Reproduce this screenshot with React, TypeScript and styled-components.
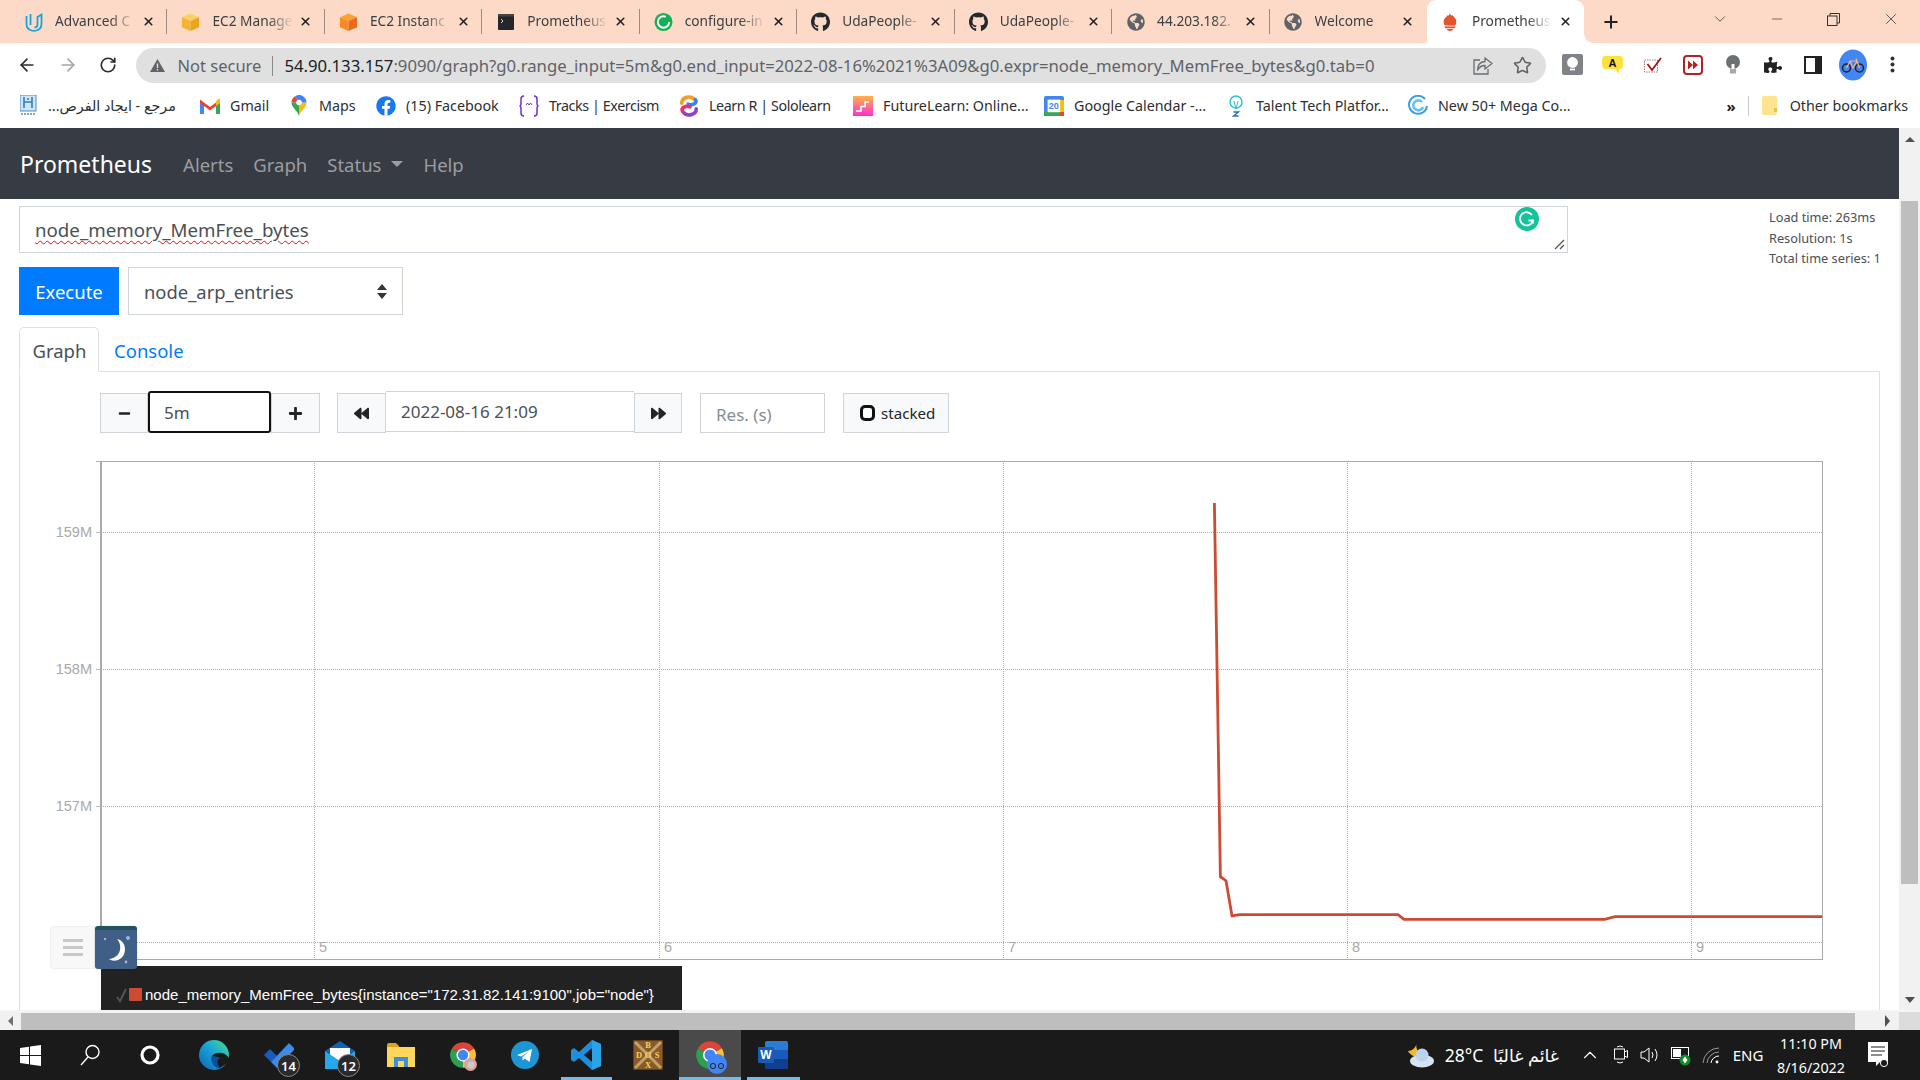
import React from "react";
import styled, { createGlobalStyle } from "styled-components";
import { ArrowLeft, ArrowRight, RotateCw, Star, Plus, X, ChevronDown, Minus, ChevronUp } from "lucide-react";
import { FaGithub, FaGlobeAmericas, FaFacebook, FaPuzzlePiece, FaBackward, FaForward, FaPlus, FaMinus } from "react-icons/fa";

const UI = `"Noto Sans", "DejaVu Sans", sans-serif`;

const Global = createGlobalStyle`
  html, body { margin: 0; padding: 0; overflow: hidden; background: #fff; }
  * { box-sizing: border-box; }
`;

const Screen = styled.div`
  width: 1920px; height: 1080px; display: flex; flex-direction: column; overflow: hidden;
  font-family: ${UI}; background: #fff;
`;

/* ---------- browser chrome ---------- */
const TabStrip = styled.div`
  height: 43px; background: #fcdac7; display: flex; align-items: stretch; padding-left: 10px; flex: none;
`;
const Tab = styled.div<{ $active?: boolean; $sep?: boolean }>`
  width: 157.45px; flex: none; position: relative; display: flex; align-items: center;
  padding: 0 12px 0 14px; gap: 12px; color: #333;
  background: ${p => (p.$active ? "#fff" : "transparent")};
  border-radius: ${p => (p.$active ? "9px 9px 0 0" : "0")};
  &::before {
    content: ""; position: absolute; right: 0; top: 9px; bottom: 9px; width: 1px;
    background: ${p => (p.$sep ? "#9a8a80" : "transparent")};
  }
  &::after {
    content: ""; position: absolute; right: -10px; bottom: 0; width: 10px; height: 10px;
    background: ${p => (p.$active ? "radial-gradient(circle at 100% 0, transparent 10px, #fff 10px)" : "none")};
  }
`;
const TabIcon = styled.span`
  width: 19px; height: 20px; flex: none; display: flex; align-items: center; justify-content: center;
`;
const TabTitle = styled.span`
  flex: 1; min-width: 0; margin-right: -7px; overflow: hidden; white-space: nowrap; font-size: 13.7px; color: #3c4043; padding-bottom: 2px;
  -webkit-mask-image: linear-gradient(to right, #000 68%, rgba(0,0,0,.1) 96%);
  mask-image: linear-gradient(to right, #000 68%, rgba(0,0,0,.1) 96%);
`;
const TabClose = styled.span`
  width: 14px; flex: none; display: flex; justify-content: center; color: #222;
`;
const NewTab = styled.span`
  width: 40px; margin-left: 6.5px; display: flex; align-items: center; justify-content: center; color: #222;
`;
const WinControls = styled.div`
  margin-left: auto; display: flex; align-items: flex-start; padding: 6px 1px 0 0;
`;
const WinBtn = styled.span<{ $w: number }>`
  width: ${p => p.$w}px; height: 26px; display: flex; align-items: center; justify-content: center; color: #333;
`;

const ToolRow = styled.div`
  height: 43px; background: #fff; display: flex; align-items: center; padding-left: 7px; flex: none;
`;
const NavBtn = styled.span<{ $off?: boolean }>`
  width: 40.5px; display: flex; justify-content: center; color: ${p => (p.$off ? "#a5a5a5" : "#2b2b2b")};
`;
const Omnibox = styled.div`
  width: 1410px; height: 35px; margin: 2px 7px 0 7px; background: #e0e0e0; border-radius: 18px;
  display: flex; align-items: center; padding-left: 14px; font-size: 16.72px; color: #5f6368; white-space: nowrap; position: relative;
`;
const NotSecure = styled.span`
  margin-left: 13px; padding-right: 11px; border-right: 1px solid #8a8a8a; line-height: 20px; font-size: 16.5px; color: #5f6368;
`;
const Url = styled.span`
  margin-left: 11px; color: #5f6368;
`;
const Host = styled.span`color: #202124;`;
const OmniActions = styled.div`
  margin-left: auto; display: flex; gap: 20px; padding-right: 14px; color: #5f6368; align-items: center;
`;
const ExtCell = styled.span`
  width: 40px; flex: none; display: flex; justify-content: center; align-items: center;
`;
const BookmarkRow = styled.div`
  height: 42px; background: #fff; display: flex; align-items: center; padding: 0 0 3px 18px; flex: none;
  font-size: 14.3px; color: #2b2f33; white-space: nowrap;
`;
const Bookmark = styled.div<{ $w: number; $tight?: boolean }>`
  width: ${p => p.$w}px; flex: none; display: flex; align-items: center; gap: 10px;
  letter-spacing: ${p => (p.$tight ? "-0.42px" : "0")};
`;
const BmIcon = styled.span`
  width: 20px; flex: none; display: flex; align-items: center; justify-content: center;
`;
const BookmarkEnd = styled.div`
  margin-left: 1px; display: flex; align-items: center; justify-content: flex-end; flex: 1; padding-right: 12px;
`;
const Chevrons = styled.span`font-weight: 700; font-size: 15px; color: #222;`;
const BmDivider = styled.span`
  width: 1px; height: 20px; background: #c8c8c8; margin: 0 13px 0 12px;
`;
const OtherLabel = styled.span`margin-left: 12px;`;

/* ---------- page viewport ---------- */
const Viewport = styled.div`
  height: 882px; display: flex; flex: none;
`;
const Page = styled.div`
  width: 1899px; height: 882px; overflow: hidden; display: flex; flex-direction: column; color: #495057;
`;
const Navbar = styled.nav`
  height: 71px; flex: none; background: #373b43; display: flex; align-items: center; padding: 1px 0 0 20px; font-size: 18.5px;
`;
const Brand = styled.span`
  color: #fff; font-size: 23px; margin-right: 31px;
`;
const NavLink = styled.span`
  color: #9b9da1; margin-right: 20px; display: flex; align-items: center;
`;
const Caret = styled.span`
  width: 0; height: 0; margin-left: 10px; border-left: 6px solid transparent; border-right: 6px solid transparent;
  border-top: 6px solid #9b9da1;
`;
const Content = styled.div`
  padding-left: 19px; flex: 1; display: flex; flex-direction: column; min-height: 0;
`;
const QueryRow = styled.div`
  display: flex; padding-top: 7px; flex: none;
`;
const QueryCol = styled.div`
  width: 1549px; flex: none;
`;
const ExprBox = styled.div`
  height: 47px; border: 1px solid #ced4da; position: relative; display: flex; align-items: center;
  padding: 0 15px; font-size: 18.7px; color: #495057; background: #fff;
`;
const ExprText = styled.span`
  text-decoration: underline wavy #e01010 1px; text-underline-offset: 3px;
`;
const GrammarlyBadge = styled.span`
  position: absolute; right: 28px; top: 0; width: 24px; height: 24px; display: flex;
`;
const ResizeHandle = styled.span`
  position: absolute; right: 2px; bottom: 2px; width: 11px; height: 11px; display: flex;
`;
const ActionRow = styled.div`
  display: flex; gap: 9px; margin-top: 14px; height: 48px;
`;
const ExecuteBtn = styled.button`
  width: 100px; border: 0; background: #007bff; color: #fff; font: 18.5px ${UI}; padding: 1px 0 0;
`;
const MetricSelect = styled.div`
  width: 275px; border: 1px solid #ced4da; display: flex; align-items: center; justify-content: space-between;
  padding: 1px 15px 0; font-size: 18.4px; color: #495057;
`;
const StatsCol = styled.div`
  margin-left: 201px; padding-top: 1px; font-size: 12.75px; line-height: 20.6px; color: #495057; white-space: nowrap;
`;
const TabNav = styled.div`
  display: flex; margin-top: 12px; height: 45px; flex: none; position: relative; z-index: 1; margin-bottom: -1px;
`;
const PageTab = styled.div<{ $active?: boolean }>`
  height: 45px; display: flex; align-items: center; font-size: 18.5px; padding-top: 2px;
  width: ${p => (p.$active ? "80px" : "auto")};
  padding-left: ${p => (p.$active ? "12.5px" : "14px")};
  color: ${p => (p.$active ? "#495057" : "#007bff")};
  border: 1px solid ${p => (p.$active ? "#dee2e6" : "transparent")};
  border-bottom-color: ${p => (p.$active ? "#fff" : "transparent")};
  border-radius: 5px 5px 0 0; background: ${p => (p.$active ? "#fff" : "transparent")};
`;
const Pane = styled.div`
  width: 1861px; flex: 1; min-height: 0; position: relative; border: 1px solid #dee2e6; border-bottom: 0;
  display: flex; flex-direction: column;
`;
const Controls = styled.div`
  display: flex; align-items: flex-start; padding: 19px 0 0 80px; height: 61px; flex: none;
`;
const Group = styled.div<{ $gap: number }>`
  display: flex; align-items: flex-start; margin-right: ${p => p.$gap}px;
`;
const CtrlBtn = styled.div<{ $w: number }>`
  width: ${p => p.$w}px; height: 40px; margin-top: 2px; background: #f8f9fa; border: 1px solid #ced4da;
  display: flex; align-items: center; justify-content: center; color: #212529;
`;
const RangeInput = styled.div`
  width: 123px; height: 42px; border: 2px solid #111; border-radius: 3px; display: flex; align-items: center;
  padding-left: 14px; font-size: 17px; color: #495057; background: #fff;
`;
const DateInput = styled.div`
  width: 248px; height: 41px; border: 1px solid #ced4da; display: flex; align-items: center;
  padding-left: 15px; font-size: 17px; color: #495057; background: #fff; border-left: 0; border-right: 0;
`;
const ResInput = styled.div`
  width: 125px; height: 40px; margin: 2px 18px 0 0; border: 1px solid #ced4da; display: flex; align-items: center;
  padding: 2px 0 0 15px; font-size: 17px; color: #868e96;
`;
const StackedBtn = styled.div`
  width: 106px; height: 40px; margin-top: 2px; background: #f8f9fa; border: 1px solid #ced4da; display: flex; align-items: center;
  padding-left: 16px; gap: 6px; font-size: 15.1px; color: #212529;
`;
const StackBox = styled.span`
  width: 15px; height: 16px; border: 3px solid #111; border-radius: 5px; background: #fff; flex: none;
`;
const ChartSvg = styled.svg`
  display: block; flex: none; margin-top: 22px;
`;
const Legend = styled.div`
  width: 581px; height: 44px; flex: none; margin-left: 81px; background: #222; color: #fff; position: relative;
  font: 15.03px "Liberation Sans", Arial, sans-serif; display: flex; align-items: flex-end; padding: 0 0 7px 14px; white-space: nowrap;
`;
const LegendCheck = styled.span`
  width: 14px; height: 16px; display: flex; flex: none;
`;
const Swatch = styled.span`
  width: 13px; height: 13px; background: #cb4b34; flex: none; margin: 0 3px 2px 0; border-radius: 1px;
`;
const ChartMenu = styled.div`
  position: absolute; left: 30px; top: 554px; width: 87px; height: 43px; display: flex;
`;
const MenuBurger = styled.div`
  width: 45px; background: #f8f8f8; border: 1px solid #efefef; border-radius: 4px 0 0 4px; display: flex;
  flex-direction: column; gap: 4px; align-items: center; justify-content: center;
`;
const BurgerBar = styled.span`
  width: 20px; height: 3px; background: #c9c9c9; display: block;
`;
const MoonBtn = styled.div`
  width: 42px; background: #3f5f87; border-top: 4px solid #24525f; border-radius: 3px; display: flex;
  align-items: center; justify-content: center; box-shadow: 0 0 2px rgba(0,0,0,.2);
`;

/* ---------- scrollbars ---------- */
const VScroll = styled.div`
  width: 21px; flex: none; background: #f1f1f1; display: flex; flex-direction: column; align-items: center;
`;
const VThumb = styled.div`
  width: 17px; height: 683px; background: #bebebe; margin-top: 59px; flex: none;
`;
const ArrowUp = styled.span`
  width: 0; height: 0; margin-top: 9px; margin-bottom: 0; flex: none;
  border-left: 5px solid transparent; border-right: 5px solid transparent; border-bottom: 5px solid #505050;
`;
const ArrowDown = styled.span`
  width: 0; height: 0; margin-top: auto; margin-bottom: 7px; flex: none;
  border-left: 5px solid transparent; border-right: 5px solid transparent; border-top: 6px solid #505050;
`;
const HScroll = styled.div`
  height: 20px; flex: none; background: #f1f1f1; display: flex; align-items: center; border-top: 2px solid #f4f4f4;
`;
const ArrowLeftTri = styled.span`
  width: 0; height: 0; margin-left: 8px; border-top: 5px solid transparent; border-bottom: 5px solid transparent; border-right: 5px solid #707070; flex: none;
`;
const HThumb = styled.div`
  width: 1834px; height: 17px; margin-left: 8px; background: #bebebe; flex: none;
`;
const ArrowRightTri = styled.span`
  width: 0; height: 0; margin-left: 30px; border-top: 6px solid transparent; border-bottom: 6px solid transparent; border-left: 5px solid #505050; flex: none;
`;
const ScrollCorner = styled.span`
  margin-left: auto; width: 21px; height: 18px; background: #dcdcdc; flex: none;
`;

/* ---------- taskbar ---------- */
const Taskbar = styled.div`
  height: 50px; flex: none; background: #1a1a1a; display: flex; color: #fff; font-size: 14.6px; white-space: nowrap;
`;
const TaskCell = styled.div<{ $w?: number; $active?: boolean; $open?: boolean }>`
  width: ${p => p.$w ?? 62}px; flex: none; position: relative; display: flex; align-items: center; justify-content: center;
  background: ${p => (p.$active ? "#4a4a4a" : "transparent")};
  &::after {
    content: ""; position: absolute; bottom: 0; height: 3px;
    left: ${p => (p.$active ? "0" : "6px")}; right: ${p => (p.$active ? "0" : "5px")};
    background: ${p => (p.$open ? "#76b9ed" : "transparent")};
  }
`;
const Badge = styled.span`
  position: absolute; right: 10px; bottom: 3px; width: 23px; height: 23px; border-radius: 50%;
  background: #2a2a2a; border: 1px solid #888; display: flex; align-items: center; justify-content: center;
  font-size: 13px; font-weight: 600; color: #fff;
`;
const Tray = styled.div`
  margin-left: auto; display: flex; align-items: center; padding-right: 26px;
`;
const TrayItem = styled.span<{ $w: number; $ml?: number; $fs?: number }>`
  width: ${p => p.$w}px; margin-left: ${p => p.$ml ?? 0}px; flex: none; display: flex; align-items: center; justify-content: center;
  font-size: ${p => p.$fs ?? 14.6}px;
`;
const Clock = styled.div`
  width: 80px; margin: 0 13px 0 2px; text-align: center; font-size: 14.3px; line-height: 23.5px; padding-top: 1px;
`;

/* ---------- favicons and other drawings ---------- */
const UdacityIcon = () => (
  <svg width="18" height="20" viewBox="0 0 18 20" fill="none" stroke="#1aa5da" strokeWidth="1.8">
    <path d="M1.5 4 V12 Q1.5 17 6.5 18.5 Q9 19.3 11.5 18.5 Q16.5 17 16.5 12 V2.5 L12.5 5 V13 Q12.5 15 9.5 15.5" />
    <path d="M5.5 2 V13" />
  </svg>
);
const CubeIcon = ({ a, b, c }: { a: string; b: string; c: string }) => (
  <svg width="20" height="20" viewBox="0 0 20 20">
    <polygon points="10,1 19,5 10,9 1,5" fill={a} />
    <polygon points="1,5 10,9 10,19.5 1,15.5" fill={b} />
    <polygon points="19,5 10,9 10,19.5 19,15.5" fill={c} />
  </svg>
);
const TerminalIcon = () => (
  <svg width="16" height="16" viewBox="0 0 16 16">
    <rect x="0" y="0" width="16" height="16" rx="1" fill="#23272b" />
    <rect x="0" y="0" width="16" height="2.5" fill="#444" />
    <path d="M3 5 L5 7 L3 9" stroke="#ddd" fill="none" strokeWidth="1" />
  </svg>
);
const ConfigIcon = () => (
  <svg width="20" height="20" viewBox="0 0 20 20">
    <circle cx="10" cy="10" r="9.5" fill="#13b055" />
    <circle cx="10" cy="10" r="6" fill="none" stroke="#fff" strokeWidth="2" strokeDasharray="30 8" />
    <path d="M7 10 L9.4 12.3 L13.4 8" stroke="#13b055" strokeWidth="2" fill="none" />
  </svg>
);
const FlameIcon = () => (
  <svg width="14" height="18" viewBox="0 0 14 18" fill="#e6522c">
    <path d="M7 0 C7.5 3 9 3 9.6 2 C9.9 3.5 12 4.5 13 6.5 C13.8 8.5 13 11.5 12 12.5 H2 C0.8 11.5 0.2 8.5 1 6.5 C2 4.5 4 4 4.4 2.3 C5 3 6 3 7 0 Z" />
    <rect x="1.8" y="13.4" width="10.4" height="1.8" />
    <path d="M3.5 16 H10.5 Q9.5 18 7 18 Q4.5 18 3.5 16 Z" />
  </svg>
);
const ArabicSiteIcon = () => (
  <svg width="17" height="21" viewBox="0 0 17 21">
    <rect x="0" y="0" width="16" height="16" fill="#cfe6f7" stroke="#4a90c9" strokeWidth="1" />
    <path d="M4 2 V13 M12 2 V13 M4 7 H12 M7 4 H9" stroke="#2f7fbf" strokeWidth="1.6" />
    <path d="M1 19 H15" stroke="#7aa9cc" strokeWidth="2" strokeDasharray="2 1" />
  </svg>
);
const GmailIcon = () => (
  <svg width="20" height="16" viewBox="0 0 20 16">
    <path d="M0 3 V16 H4 V6.5 Z" fill="#4285f4" />
    <path d="M20 3 V16 H16 V6.5 Z" fill="#34a853" />
    <path d="M0 1.5 L10 9 L20 1.5 V5 L10 12.5 L0 5 Z" fill="#ea4335" />
    <path d="M16 3 L20 0 V5 L16 8 Z" fill="#fbbc04" />
  </svg>
);
const MapsIcon = () => (
  <svg width="16" height="21" viewBox="0 0 16 21">
    <path d="M8 21 C7 16 0.5 13 0.5 7.5 L8 7.5 Z" fill="#34a853" />
    <path d="M8 21 C9 16 15.5 13 15.5 7.5 L8 7.5 Z" fill="#fbbc04" />
    <path d="M0.5 7.5 A7.5 7.5 0 0 1 4 1.2 L8 7.5 Z" fill="#ea4335" />
    <path d="M4 1.2 A7.5 7.5 0 0 1 15.5 7.5 L8 7.5 Z" fill="#4285f4" />
    <circle cx="8" cy="7.5" r="2.8" fill="#fff" />
  </svg>
);
const TracksIcon = () => (
  <svg width="20" height="22" viewBox="0 0 20 22" fill="none" stroke="#6b2fd6" strokeWidth="1.5">
    <path d="M5 1 Q2 1 2 4 V8 Q2 11 0.5 11 Q2 11 2 14 V18 Q2 21 5 21" />
    <path d="M15 1 Q18 1 18 4 V8 Q18 11 19.5 11 Q18 11 18 14 V18 Q18 21 15 21" />
    <path d="M7 10 L8.5 8 L10 10 M10 10 L11.5 8 L13 10" stroke="#6b2fd6" strokeWidth="1" />
  </svg>
);
const SoloIcon = () => (
  <svg width="22" height="24" viewBox="0 0 22 24" fill="none" strokeWidth="4" strokeLinecap="round">
    <path d="M3 9 C3 2 13 0 17 5" stroke="#f59e27" />
    <path d="M18 5 C21 9 14 12 10 10" stroke="#3b82e6" />
    <path d="M19 15 C19 22 9 24 5 19" stroke="#8e44c9" />
    <path d="M4 18 C1 14 8 11 12 13" stroke="#ef2f6b" />
  </svg>
);
const FutureIcon = () => (
  <svg width="20" height="20" viewBox="0 0 20 20">
    <defs>
      <linearGradient id="fl" x1="0" y1="0" x2="0" y2="1">
        <stop offset="0" stopColor="#ffb347" />
        <stop offset="1" stopColor="#ff2fd0" />
      </linearGradient>
    </defs>
    <rect width="20" height="20" fill="url(#fl)" />
    <path d="M3 15 H8 V10.5 H12 V6 H16" stroke="#fff" strokeWidth="1.6" fill="none" />
  </svg>
);
const CalIcon = () => (
  <svg width="20" height="20" viewBox="0 0 20 20">
    <rect width="20" height="20" rx="2" fill="#4285f4" />
    <rect x="16" y="4" width="4" height="12" fill="#fbbc04" />
    <rect x="0" y="16" width="20" height="4" fill="#34a853" />
    <rect x="16" y="16" width="4" height="4" fill="#ea4335" />
    <rect x="3.6" y="3.6" width="12.6" height="12.6" fill="#fff" />
    <text x="9.8" y="13.4" fontSize="9" fontWeight="700" fontFamily="Liberation Sans" textAnchor="middle" fill="#4285f4">20</text>
  </svg>
);
const TalentIcon = () => (
  <svg width="16" height="22" viewBox="0 0 16 22" fill="none" stroke="#2dc3d6" strokeWidth="1.5">
    <circle cx="8" cy="7" r="6" />
    <path d="M6 6 L8 14 L10 6" strokeWidth="1" />
    <path d="M5.5 17 H10.5 L5.5 21 H10.5" stroke="#2d6fb8" strokeWidth="1.4" />
  </svg>
);
const MegaIcon = () => (
  <svg width="20" height="21" viewBox="0 0 20 21" fill="none" stroke="#3aa0e8" strokeWidth="2">
    <path d="M17 4 A9 9 0 1 0 19 11" />
    <path d="M14 7 A5 5 0 1 0 15 12" strokeWidth="2.6" stroke="#6cbcf2" />
  </svg>
);
const FolderBm = () => (
  <svg width="16" height="20" viewBox="0 0 16 20">
    <rect x="0" y="0" width="15" height="19" rx="2" fill="#fde58f" />
    <rect x="12" y="12" width="3" height="4" fill="#e6c34f" />
  </svg>
);
const BulbBox = () => (
  <svg width="21" height="21" viewBox="0 0 21 21">
    <rect width="21" height="21" rx="2" fill="#7f8387" />
    <circle cx="10.5" cy="8.5" r="5.4" fill="#fff" />
    <rect x="8" y="14.6" width="5" height="1.8" fill="#fff" />
  </svg>
);
const AnnotateIcon = () => (
  <svg width="21" height="20" viewBox="0 0 21 20">
    <path d="M3 1 H18 Q21 1 21 5 V10 Q21 14 18 14 H17 L17 19 L13 14 H4 Q0 14 0 9 V5 Q0 1 3 1 Z" fill="#fde23f" />
    <text x="10.5" y="12" textAnchor="middle" fontSize="11" fontWeight="700" fontFamily="Liberation Sans" fill="#111">A</text>
  </svg>
);
const CheckBoxExt = () => (
  <svg width="18" height="16" viewBox="0 0 18 16">
    <rect x="0.5" y="3" width="13" height="12" fill="none" stroke="#c46a6a" strokeWidth="1" strokeDasharray="1.5 1" />
    <path d="M3.5 7 L8 13 L17 1" stroke="#a01818" strokeWidth="1.8" fill="none" />
  </svg>
);
const ForwardExt = () => (
  <svg width="20" height="20" viewBox="0 0 20 20">
    <rect x="1" y="1" width="18" height="18" rx="3" fill="#fff" stroke="#b22222" strokeWidth="2" />
    <polygon points="5,5.5 10,10 5,14.5" fill="#b22222" />
    <polygon points="10,5.5 15,10 10,14.5" fill="#b22222" />
  </svg>
);
const BulbGrey = () => (
  <svg width="16" height="19" viewBox="0 0 16 19">
    <circle cx="8" cy="7" r="7" fill="#6d7074" />
    <path d="M6.5 9 V14 H9.5 V9 Z" fill="#fff" />
    <rect x="5" y="14" width="6" height="4.5" fill="#a8a8a8" />
  </svg>
);
const SidePanel = () => (
  <svg width="18" height="18" viewBox="0 0 18 18">
    <rect x="1" y="1" width="16" height="16" fill="#fff" stroke="#222" strokeWidth="2" />
    <rect x="11" y="1" width="6" height="16" fill="#222" />
  </svg>
);
const Avatar = () => (
  <svg width="28" height="32" viewBox="0 0 28 32">
    <ellipse cx="14" cy="16" rx="14" ry="15.5" fill="#4285f4" />
    <circle cx="7.5" cy="19" r="4" fill="none" stroke="#222" strokeWidth="1.5" />
    <circle cx="20.5" cy="19" r="4" fill="none" stroke="#222" strokeWidth="1.5" />
    <path d="M7.5 19 L11 12 H18 L20.5 19 M11 12 L14 19 L18 12 M17 9.5 L18 12" stroke="#ffb27a" strokeWidth="1.2" fill="none" />
  </svg>
);
const Kebab = () => (
  <svg width="5" height="17" viewBox="0 0 5 17" fill="#333">
    <circle cx="2.5" cy="2.5" r="2" /><circle cx="2.5" cy="8.5" r="2" /><circle cx="2.5" cy="14.5" r="2" />
  </svg>
);
const Warn = () => (
  <svg width="15" height="13" viewBox="0 0 15 13">
    <path d="M7.5 0 L15 13 H0 Z" fill="#5f6368" />
    <rect x="6.8" y="4.4" width="1.4" height="4.6" fill="#e0e0e0" />
    <rect x="6.8" y="10" width="1.4" height="1.4" fill="#e0e0e0" />
  </svg>
);
const ShareBox = () => (
  <svg width="20" height="18" viewBox="0 0 20 18" fill="none" stroke="#6a6e72" strokeWidth="1.3">
    <path d="M7 3 H1 V17 H15 V12" />
    <path d="M12 1 L19 6.5 L12 12 V8.5 C8 8.5 6 10 4.5 13.5 C4.5 8 7.5 4.8 12 4.5 Z" />
  </svg>
);
const RestoreIcon = () => (
  <svg width="13" height="13" viewBox="0 0 13 13" fill="none" stroke="#333" strokeWidth="1">
    <rect x="0.5" y="3" width="9.5" height="9.5" />
    <path d="M3 3 V0.5 H12.5 V10 H10" />
  </svg>
);
const Grammarly = () => (
  <svg width="24" height="24" viewBox="0 0 24 24">
    <circle cx="12" cy="12" r="12" fill="#15c39a" />
    <path d="M17 8 A6.6 6.6 0 1 0 18 13.5 H13.5" fill="none" stroke="#fff" strokeWidth="1.8" />
    <path d="M15.5 15.5 L18.4 13.5 L18.8 17" fill="#fff" />
  </svg>
);
const Grip = () => (
  <svg width="11" height="11" viewBox="0 0 11 11" stroke="#555" strokeWidth="1.3">
    <path d="M1 10 L10 1 M6 10 L10 6" />
  </svg>
);
const SortArrows = () => (
  <svg width="10" height="15" viewBox="0 0 10 15" fill="#333">
    <polygon points="5,0 10,6 0,6" /><polygon points="5,15 10,9 0,9" />
  </svg>
);
const Moon = () => (
  <svg width="30" height="34" viewBox="0 0 30 34">
    <path d="M19 5 C25 11 23 24 11 25 C16 29 27 26 27 15 C27 10 24 6 19 5 Z" fill="#fff" transform="translate(-3,1)" />
    <circle cx="4" cy="6" r="1.2" fill="#9fb6d0" />
    <circle cx="27" cy="5" r="2" fill="#9fb6d0" />
    <circle cx="25" cy="29" r="1.4" fill="#9fb6d0" />
  </svg>
);

const WindowsLogo = () => (
  <svg width="21" height="21" viewBox="0 0 21 21" fill="#fff">
    <polygon points="0,3 9,1.7 9,10 0,10" /><polygon points="10,1.5 21,0 21,10 10,10" />
    <polygon points="0,11 9,11 9,19.3 0,18" /><polygon points="10,11 21,11 21,21 10,19.5" />
  </svg>
);
const SearchIcon = () => (
  <svg width="20" height="22" viewBox="0 0 20 22" fill="none" stroke="#fff" strokeWidth="1.4">
    <circle cx="12.5" cy="8" r="6.5" /><path d="M8 13 L1 21" />
  </svg>
);
const CortanaIcon = () => (
  <svg width="20" height="20" viewBox="0 0 20 20" fill="none" stroke="#fff" strokeWidth="3.2">
    <circle cx="10" cy="10" r="8" />
  </svg>
);
const EdgeIcon = () => (
  <svg width="30" height="30" viewBox="0 0 30 30">
    <defs>
      <linearGradient id="edge" x1="1" y1="0" x2="0" y2="1">
        <stop offset="0" stopColor="#4fdc8a" />
        <stop offset="0.45" stopColor="#1aa6d6" />
        <stop offset="1" stopColor="#0c62b8" />
      </linearGradient>
    </defs>
    <circle cx="15" cy="15" r="15" fill="url(#edge)" />
    <path d="M30 18 C26 12 17 11 13 16 C11 21 15 27 21 28 L30 22 Z" fill="#1a1a1a" />
    <path d="M13 16 C11 23 16 29 22 28.5 C18 25 17 20 21 18 C16 16 14 16 13 16 Z" fill="#0b4f9c" />
  </svg>
);
const TodoIcon = () => (
  <svg width="30" height="26" viewBox="0 0 30 26">
    <polygon points="0,13 6,7 13,14 7,20" fill="#185abd" />
    <polygon points="7,20 25,1 31,7 13,26" fill="#3c8be8" />
  </svg>
);
const MailIcon = () => (
  <svg width="30" height="28" viewBox="0 0 30 28">
    <polygon points="0,10 15,0 30,10 15,20" fill="#0f63b5" />
    <polygon points="5,7 25,7 25,16 15,21 5,16" fill="#fff" />
    <polygon points="0,10 15,20 30,10 30,28 0,28" fill="#28a8ea" />
  </svg>
);
const FolderTask = () => (
  <svg width="28" height="24" viewBox="0 0 28 24">
    <path d="M0 2 Q0 0 2 0 H9 L12 3 H12 V6 H0 Z" fill="#e0a020" />
    <rect x="0" y="4" width="28" height="20" fill="#fdd65e" />
    <path d="M7 24 V14 H21 V24 H17 V18 H11 V24 Z" fill="#3d8fd6" />
  </svg>
);
const ChromeIcon = ({ size = 28 }: { size?: number }) => (
  <svg width={size} height={size} viewBox="0 0 24 24">
    <path d="M12 12 L2.47 6.5 A11 11 0 0 1 21.53 6.5 Z" fill="#db4437" />
    <path d="M12 12 L21.53 6.5 A11 11 0 0 1 12 23 Z" fill="#fbc02d" />
    <path d="M12 12 L12 23 A11 11 0 0 1 2.47 6.5 Z" fill="#2e9e4f" />
    <circle cx="12" cy="12" r="5.6" fill="#fff" />
    <circle cx="12" cy="12" r="4.4" fill="#4285f4" />
  </svg>
);
const ChromeOverlay = styled.span`
  position: absolute; right: 14px; bottom: 6px; display: flex;
`;
const ChromePin = styled.span`
  position: absolute; right: 17px; bottom: 9px; display: flex;
`;
const TelegramIcon = () => (
  <svg width="28" height="28" viewBox="0 0 28 28">
    <circle cx="14" cy="14" r="14" fill="#1e96d3" />
    <path d="M6 14 L21 8 L18.5 21 L13.8 17.6 L11.6 19.6 L11.4 16 L18 10.5 L10 15.5 Z" fill="#fff" />
  </svg>
);
const VsCodeIcon = () => (
  <svg width="30" height="30" viewBox="0 0 30 30">
    <path d="M21 0 L30 4 V26 L21 30 L8 18 L3 22 L0 20 V10 L3 8 L8 12 Z M21 8 L13 15 L21 22 Z" fill="#1f8fdc" />
    <path d="M21 0 L30 4 V26 L21 30 Z" fill="#2aa6ea" opacity=".9" />
  </svg>
);
const DosBox = () => (
  <svg width="30" height="30" viewBox="0 0 30 30">
    <rect width="30" height="30" fill="#8a5a2b" stroke="#5a3416" strokeWidth="1.5" />
    <path d="M2 2 L28 28 M28 2 L2 28" stroke="#bfa36a" strokeWidth="3" />
    <g fontFamily="Liberation Serif" fontSize="8.5" fontWeight="700" fill="#f2d35a" textAnchor="middle">
      <text x="15" y="8">B</text>
      <text x="6" y="18">D</text><text x="15" y="18">O</text><text x="24" y="18">S</text>
      <text x="15" y="28">X</text>
    </g>
  </svg>
);
const WordIcon = () => (
  <svg width="30" height="28" viewBox="0 0 30 28">
    <rect x="7" y="0" width="23" height="28" rx="2" fill="#2b7cd3" />
    <rect x="7" y="18" width="23" height="10" fill="#103f91" />
    <rect x="7" y="9" width="23" height="9" fill="#185abd" />
    <rect x="0" y="6" width="16" height="16" rx="1" fill="#1a5bb5" />
    <text x="8" y="18" textAnchor="middle" fontSize="12" fontWeight="700" fontFamily="Liberation Sans" fill="#fff">W</text>
  </svg>
);
const WeatherIcon = () => (
  <svg width="28" height="26" viewBox="0 0 28 26">
    <path d="M10 0 C8 5 10 11 17 13 C12 17 3 14 1 9 C5 9 9 6 10 0 Z" fill="#f5b921" />
    <ellipse cx="15" cy="19" rx="12" ry="6.5" fill="#d5e3f2" />
    <circle cx="15" cy="13" r="6.5" fill="#bcd3ec" />
  </svg>
);
const TrayCamera = () => (
  <svg width="14" height="20" viewBox="0 0 14 20" fill="none" stroke="#fff" strokeWidth="1">
    <rect x="0.5" y="4" width="10" height="10" /><path d="M10.5 7 L13.5 5.5 V12.5 L10.5 11 M3 2 Q6 0 9 2 M3 17 Q6 19 9 17" />
  </svg>
);
const TraySpeaker = () => (
  <svg width="20" height="20" viewBox="0 0 20 20" fill="none" stroke="#fff" strokeWidth="1">
    <path d="M1 7 H4 L9 3 V17 L4 13 H1 Z M12 7 Q14 10 12 13 M15 4 Q19 10 15 16" />
  </svg>
);
const TrayBattery = () => (
  <svg width="20" height="22" viewBox="0 0 20 22">
    <rect x="0.5" y="3.5" width="17" height="11" fill="none" stroke="#fff" />
    <rect x="2" y="5" width="8" height="8" fill="#fff" />
    <circle cx="14" cy="16" r="5.5" fill="#118c2a" />
    <path d="M14 12.5 L11.5 16 L14 19.5 L16.5 16 Z" fill="#fff" />
  </svg>
);
const TrayWifi = () => (
  <svg width="18" height="20" viewBox="0 0 18 20" fill="none" stroke="#fff" strokeWidth="1">
    <path d="M1 18 A16 16 0 0 1 17 3 M5 18 A12 12 0 0 1 17 7" opacity=".55" />
    <path d="M9 18 A8 8 0 0 1 17 11" />
    <circle cx="15" cy="17" r="1.4" fill="#fff" stroke="none" />
  </svg>
);
const TrayNotify = () => (
  <svg width="22" height="26" viewBox="0 0 22 26">
    <path d="M0 0 H20 V20 H12 L8 24 V20 H0 Z" fill="#fff" />
    <path d="M3 5 H17 M3 9 H17 M3 13 H14" stroke="#1a1a1a" strokeWidth="1.2" />
    <circle cx="16" cy="21" r="3.6" fill="#1a1a1a" stroke="#fff" strokeWidth="1" />
  </svg>
);

const tabs: { title: string; icon: React.ReactNode; sep?: boolean; active?: boolean }[] = [
  { title: "Advanced C", icon: <UdacityIcon />, sep: true },
  { title: "EC2 Manage", icon: <CubeIcon a="#fbcf60" b="#f4b432" c="#e9a521" />, sep: true },
  { title: "EC2 Instanc", icon: <CubeIcon a="#ffa033" b="#f98a24" c="#e76a1f" />, sep: true },
  { title: "Prometheus", icon: <TerminalIcon />, sep: true },
  { title: "configure-in", icon: <ConfigIcon />, sep: true },
  { title: "UdaPeople-", icon: <FaGithub size={20} color="#24292e" />, sep: true },
  { title: "UdaPeople-", icon: <FaGithub size={20} color="#24292e" />, sep: true },
  { title: "44.203.182.", icon: <FaGlobeAmericas size={18} color="#5f6368" />, sep: true },
  { title: "Welcome", icon: <FaGlobeAmericas size={18} color="#5f6368" /> },
  { title: "Prometheus", icon: <FlameIcon />, active: true },
];

const bookmarks: { w: number; label: string; icon: React.ReactNode; tight?: boolean; rtl?: boolean }[] = [
  { w: 182, label: "مرجع - ايجاد الفرص...", icon: <ArabicSiteIcon />, rtl: true },
  { w: 89, label: "Gmail", icon: <GmailIcon /> },
  { w: 87, label: "Maps", icon: <MapsIcon /> },
  { w: 143, label: "(15) Facebook", icon: <FaFacebook size={20} color="#1877f2" /> },
  { w: 160, label: "Tracks | Exercism", icon: <TracksIcon />, tight: true },
  { w: 174, label: "Learn R | Sololearn", icon: <SoloIcon />, tight: true },
  { w: 191, label: "FutureLearn: Online...", icon: <FutureIcon /> },
  { w: 182, label: "Google Calendar -...", icon: <CalIcon /> },
  { w: 182, label: "Talent Tech Platfor...", icon: <TalentIcon /> },
  { w: 300, label: "New 50+ Mega Co...", icon: <MegaIcon /> },
];

const exts = [<BulbBox key="a" />, <AnnotateIcon key="b" />, <CheckBoxExt key="c" />, <ForwardExt key="d" />, <BulbGrey key="e" />,
  <FaPuzzlePiece key="f" size={18} color="#222" />, <SidePanel key="g" />, <Avatar key="h" />, <Kebab key="i" />];

const X0 = 101, X1 = 1822, Y0 = 461, Y1 = 959;
const gridY = [{ y: 532, l: "159M" }, { y: 669, l: "158M" }, { y: 806, l: "157M" }, { y: 942, l: "" }];
const gridX = [{ x: 314, l: "5" }, { x: 659, l: "6" }, { x: 1003, l: "7" }, { x: 1347, l: "8" }, { x: 1691, l: "9" }];
const series = "1214.4,503 1220.4,876.7 1226,880.7 1232,916 1239.7,914.7 1398,914.7 1404,919.3 1604.7,919.3 1615,916.7 1822,916.7";

const Chart = () => (
  <ChartSvg width={1830} height={511} viewBox="20 455 1830 511">
    {gridY.map(g => (
      <g key={g.y}>
        <line x1={X0} x2={X1} y1={g.y + 0.5} y2={g.y + 0.5} stroke="#b0b0b0" strokeWidth={1} strokeDasharray="1 1" />
        {g.l && <line x1={96} x2={X0} y1={g.y + 0.5} y2={g.y + 0.5} stroke="#bdbdbd" strokeWidth={1} />}
        {g.l && <text x={92} y={g.y + 5} textAnchor="end" fontFamily="Liberation Sans" fontSize={14.5} fill="#a9a9a9">{g.l}</text>}
      </g>
    ))}
    {gridX.map(g => (
      <g key={g.x}>
        <line x1={g.x + 0.5} x2={g.x + 0.5} y1={Y0} y2={Y1} stroke="#b0b0b0" strokeWidth={1} strokeDasharray="1 1" />
        <text x={g.x + 5} y={952} fontFamily="Liberation Sans" fontSize={14.5} fill="#a9a9a9">{g.l}</text>
      </g>
    ))}
    <line x1={96} x2={X0} y1={Y0 + 0.5} y2={Y0 + 0.5} stroke="#aaa" />
    <rect x={X0 + 0.5} y={Y0 + 0.5} width={X1 - X0} height={Y1 - Y0} fill="none" stroke="#aaa" strokeWidth={1} />
    <line x1={X0} x2={X0} y1={Y0} y2={Y1} stroke="#aaa" strokeWidth={2} />
    <polyline points={series} fill="none" stroke="#cb4b34" strokeWidth={2.8} strokeLinejoin="miter" />
  </ChartSvg>
);

export default function App() {
  return (
    <Screen>
      <Global />
      <TabStrip>
        {tabs.map((t, i) => (
          <Tab key={i} $active={t.active} $sep={t.sep}>
            <TabIcon>{t.icon}</TabIcon>
            <TabTitle>{t.title}</TabTitle>
            <TabClose><X size={13} strokeWidth={3} /></TabClose>
          </Tab>
        ))}
        <NewTab><Plus size={20} strokeWidth={2.4} /></NewTab>
        <WinControls>
          <WinBtn $w={57}><ChevronDown size={18} strokeWidth={1} /></WinBtn>
          <WinBtn $w={57}><Minus size={16} strokeWidth={1} /></WinBtn>
          <WinBtn $w={57}><RestoreIcon /></WinBtn>
          <WinBtn $w={57}><X size={18} strokeWidth={1} /></WinBtn>
        </WinControls>
      </TabStrip>

      <ToolRow>
        <NavBtn><ArrowLeft size={20} strokeWidth={2} /></NavBtn>
        <NavBtn $off><ArrowRight size={20} strokeWidth={2} /></NavBtn>
        <NavBtn><RotateCw size={18} strokeWidth={2.2} /></NavBtn>
        <Omnibox>
          <Warn />
          <NotSecure>Not secure</NotSecure>
          <Url><Host>54.90.133.157</Host>:9090/graph?g0.range_input=5m&amp;g0.end_input=2022-08-16%2021%3A09&amp;g0.expr=node_memory_MemFree_bytes&amp;g0.tab=0</Url>
          <OmniActions>
            <ShareBox />
            <Star size={19} strokeWidth={2} />
          </OmniActions>
        </Omnibox>
        {exts.map((e, i) => <ExtCell key={i}>{e}</ExtCell>)}
      </ToolRow>

      <BookmarkRow>
        {bookmarks.map(b => (
          <Bookmark key={b.label} $w={b.w} $tight={b.tight}>
            <BmIcon>{b.icon}</BmIcon>
            <span dir={b.rtl ? "rtl" : undefined}>{b.label}</span>
          </Bookmark>
        ))}
        <BookmarkEnd>
          <Chevrons>»</Chevrons>
          <BmDivider />
          <FolderBm />
          <OtherLabel>Other bookmarks</OtherLabel>
        </BookmarkEnd>
      </BookmarkRow>

      <Viewport>
        <Page>
          <Navbar>
            <Brand>Prometheus</Brand>
            <NavLink>Alerts</NavLink>
            <NavLink>Graph</NavLink>
            <NavLink>Status<Caret /></NavLink>
            <NavLink>Help</NavLink>
          </Navbar>
          <Content>
            <QueryRow>
              <QueryCol>
                <ExprBox>
                  <ExprText>node_memory_MemFree_bytes</ExprText>
                  <GrammarlyBadge><Grammarly /></GrammarlyBadge>
                  <ResizeHandle><Grip /></ResizeHandle>
                </ExprBox>
                <ActionRow>
                  <ExecuteBtn>Execute</ExecuteBtn>
                  <MetricSelect>node_arp_entries<SortArrows /></MetricSelect>
                </ActionRow>
              </QueryCol>
              <StatsCol>
                <div>Load time: 263ms</div>
                <div>Resolution: 1s</div>
                <div>Total time series: 1</div>
              </StatsCol>
            </QueryRow>
            <TabNav>
              <PageTab $active>Graph</PageTab>
              <PageTab>Console</PageTab>
            </TabNav>
            <Pane>
              <Controls>
                <Group $gap={17}>
                  <CtrlBtn $w={48}><FaMinus size={13} /></CtrlBtn>
                  <RangeInput>5m</RangeInput>
                  <CtrlBtn $w={49}><FaPlus size={15} /></CtrlBtn>
                </Group>
                <Group $gap={18}>
                  <CtrlBtn $w={49}><FaBackward size={15} /></CtrlBtn>
                  <DateInput>2022-08-16 21:09</DateInput>
                  <CtrlBtn $w={48}><FaForward size={15} /></CtrlBtn>
                </Group>
                <ResInput>Res. (s)</ResInput>
                <StackedBtn><StackBox />stacked</StackedBtn>
              </Controls>
              <Chart />
              <Legend>
                <LegendCheck>
                  <svg width="14" height="16" viewBox="0 0 14 16" fill="none" stroke="#555" strokeWidth="2"><path d="M2 10 L5 14 L11 2" /></svg>
                </LegendCheck>
                <Swatch />
                <span>{'node_memory_MemFree_bytes{instance="172.31.82.141:9100",job="node"}'}</span>
              </Legend>
              <ChartMenu>
                <MenuBurger><BurgerBar /><BurgerBar /><BurgerBar /></MenuBurger>
                <MoonBtn><Moon /></MoonBtn>
              </ChartMenu>
            </Pane>
          </Content>
        </Page>
        <VScroll>
          <ArrowUp />
          <VThumb />
          <ArrowDown />
        </VScroll>
      </Viewport>

      <HScroll>
        <ArrowLeftTri />
        <HThumb />
        <ArrowRightTri />
        <ScrollCorner />
      </HScroll>

      <Taskbar>
        <TaskCell $w={60}><WindowsLogo /></TaskCell>
        <TaskCell $w={60}><SearchIcon /></TaskCell>
        <TaskCell $w={60}><CortanaIcon /></TaskCell>
        <TaskCell $w={68}><EdgeIcon /></TaskCell>
        <TaskCell><TodoIcon /><Badge>14</Badge></TaskCell>
        <TaskCell $w={60}><MailIcon /><Badge>12</Badge></TaskCell>
        <TaskCell $w={61}><FolderTask /></TaskCell>
        <TaskCell $w={63}>
          <ChromeIcon />
          <ChromePin>
            <svg width="13" height="13" viewBox="0 0 13 13"><circle cx="6.5" cy="6.5" r="6.5" fill="#d9a49a" /><circle cx="7" cy="7" r="3.4" fill="#ccc" /></svg>
          </ChromePin>
        </TaskCell>
        <TaskCell $w={61}><TelegramIcon /></TaskCell>
        <TaskCell $open><VsCodeIcon /></TaskCell>
        <TaskCell><DosBox /></TaskCell>
        <TaskCell $open $active><ChromeIcon size={30} /><ChromeOverlay>
          <svg width="20" height="20" viewBox="0 0 20 20"><circle cx="10" cy="10" r="10" fill="#4285f4" /><circle cx="6" cy="12" r="2.6" fill="none" stroke="#222" /><circle cx="14" cy="12" r="2.6" fill="none" stroke="#222" /></svg>
        </ChromeOverlay></TaskCell>
        <TaskCell $w={64} $open><WordIcon /></TaskCell>
        <Tray>
          <TrayItem $w={32}><WeatherIcon /></TrayItem>
          <TrayItem $w={44} $ml={5} $fs={17.5}>28°C</TrayItem>
          <TrayItem $w={76} $ml={2} $fs={17.5}>غائم غالبًا</TrayItem>
          <TrayItem $w={28} $ml={12}><ChevronUp size={22} strokeWidth={1.2} /></TrayItem>
          <TrayItem $w={30} $ml={2}><TrayCamera /></TrayItem>
          <TrayItem $w={30} $ml={-1}><TraySpeaker /></TrayItem>
          <TrayItem $w={30} $ml={1}><TrayBattery /></TrayItem>
          <TrayItem $w={30}><TrayWifi /></TrayItem>
          <TrayItem $w={42} $ml={1} $fs={15}>ENG</TrayItem>
          <Clock><div>11:10 PM</div><div>8/16/2022</div></Clock>
          <TrayItem $w={30}><TrayNotify /></TrayItem>
        </Tray>
      </Taskbar>
    </Screen>
  );
}
